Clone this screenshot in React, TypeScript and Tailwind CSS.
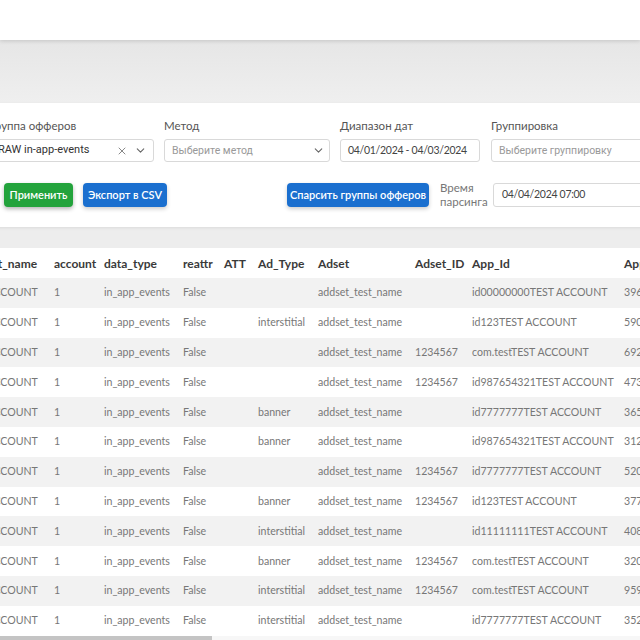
import { ChevronDown, X } from 'lucide-react'

type Row = {
  adType: string;
  adsetId: string;
  appId: string;
  app: string;
}

const rows: Row[] = [
  { adType: '', adsetId: '', appId: 'id00000000TEST ACCOUNT', app: '39612' },
  { adType: 'interstitial', adsetId: '', appId: 'id123TEST ACCOUNT', app: '59034' },
  { adType: '', adsetId: '1234567', appId: 'com.testTEST ACCOUNT', app: '69215' },
  { adType: '', adsetId: '1234567', appId: 'id987654321TEST ACCOUNT', app: '47381' },
  { adType: 'banner', adsetId: '', appId: 'id7777777TEST ACCOUNT', app: '36544' },
  { adType: 'banner', adsetId: '', appId: 'id987654321TEST ACCOUNT', app: '31209' },
  { adType: '', adsetId: '1234567', appId: 'id7777777TEST ACCOUNT', app: '52077' },
  { adType: 'banner', adsetId: '1234567', appId: 'id123TEST ACCOUNT', app: '37760' },
  { adType: 'interstitial', adsetId: '', appId: 'id11111111TEST ACCOUNT', app: '40818' },
  { adType: 'banner', adsetId: '1234567', appId: 'com.testTEST ACCOUNT', app: '32093' },
  { adType: 'interstitial', adsetId: '1234567', appId: 'com.testTEST ACCOUNT', app: '95946' },
  { adType: 'interstitial', adsetId: '', appId: 'id7777777TEST ACCOUNT', app: '35221' },
]

const headers = ['account_name', 'account', 'data_type', 'reattr', 'ATT', 'Ad_Type', 'Adset', 'Adset_ID', 'App_Id', 'App_Name']

const gridCols = 'grid grid-cols-[94px_50px_79px_41px_34px_60px_97px_57px_152px_80px]'

function Field({ label, width, children }: { label: string; width: string; children: React.ReactNode }) {
  return (
    <div className={width}>
      <div className="text-[11.5px] leading-[14px] text-[#555] mb-[6px] whitespace-nowrap">{label}</div>
      {children}
    </div>
  )
}

export default function App() {
  return (
    <div className="w-[640px] h-[640px] overflow-hidden bg-[#ededed] font-['Lato',sans-serif]">
      <div className="h-[40px] bg-white shadow-[0_1px_4px_rgba(0,0,0,0.15)] relative z-10" />
      <div className="h-[63px] bg-gradient-to-b from-[#e6e6e6] to-[#efefef]" />

      <div className="-ml-[26px] w-[720px] h-[124px] bg-white shadow-[0_1px_3px_rgba(0,0,0,0.08)] pt-[16px] pl-[16px]">
        <div className="flex gap-[10px]">
          <Field label="Группа офферов" width="w-[164px]">
            <div className="h-[23px] border border-[#d9d9d9] rounded-[3px] flex items-center pl-[7px] pr-[6px] font-['Roboto',sans-serif] text-[11px] text-[#333]">
              <span className="flex-1 whitespace-nowrap">RAW in-app-events</span>
              <X size={12} className="text-[#888] mr-[6px]" strokeWidth={2} />
              <ChevronDown size={13} className="text-[#666]" strokeWidth={2} />
            </div>
          </Field>
          <Field label="Метод" width="w-[166px]">
            <div className="h-[23px] border border-[#d9d9d9] rounded-[3px] flex items-center pl-[7px] pr-[4px] font-['Roboto',sans-serif] text-[10.5px] text-[#999]">
              <span className="flex-1">Выберите метод</span>
              <ChevronDown size={13} className="text-[#666]" strokeWidth={2} />
            </div>
          </Field>
          <Field label="Диапазон дат" width="w-[140px]">
            <div className="h-[23px] border border-[#d9d9d9] rounded-[3px] flex items-center pl-[7px] text-[10.5px] tracking-[-0.3px] text-[#444] whitespace-nowrap">
              04/01/2024 - 04/03/2024
            </div>
          </Field>
          <Field label="Группировка" width="w-[170px] ml-[1px]">
            <div className="h-[23px] border border-[#d9d9d9] rounded-[3px] flex items-center pl-[7px] font-['Roboto',sans-serif] text-[10.5px] text-[#999] whitespace-nowrap">
              Выберите группировку
            </div>
          </Field>
        </div>

        <div className="flex items-center mt-[21px] h-[24px]">
          <button className="ml-[14px] w-[69px] h-[24px] rounded-[4px] bg-[#23a33c] text-white text-[11px] font-semibold shadow-[0_2px_4px_rgba(0,0,0,0.3)]">
            Применить
          </button>
          <button className="ml-[10px] w-[84px] h-[24px] rounded-[4px] bg-[#1a6fcf] text-white text-[11px] font-semibold shadow-[0_2px_4px_rgba(0,0,0,0.2)]">
            Экспорт в CSV
          </button>
          <button className="ml-[120px] w-[142px] h-[24px] rounded-[4px] bg-[#1a6fcf] text-white text-[11px] font-semibold shadow-[0_2px_4px_rgba(0,0,0,0.2)] whitespace-nowrap">
            Спарсить группы офферов
          </button>
          <div className="ml-[11px] w-[44px] text-[11.5px] leading-[14px] text-[#777]">
            Время парсинга
          </div>
          <div className="ml-[9px] w-[170px] h-[24px] border border-[#d9d9d9] rounded-[3px] flex items-center pl-[8px] text-[10.5px] tracking-[-0.3px] text-[#444]">
            04/04/2024 07:00
          </div>
        </div>
      </div>

      <div className="h-[21px]" />

      <div className="bg-white w-[700px] -ml-[40px]">
        <div className={`${gridCols} h-[30px] pt-[2px] items-center text-[12px] font-bold text-[#3a3a3a]`}>
          {headers.map((h) => (
            <div key={h} className="whitespace-nowrap">{h}</div>
          ))}
        </div>
        {rows.map((r, i) => (
          <div
            key={i}
            className={`${gridCols} h-[29.8px] pt-[1px] items-center text-[10.6px] text-[#777] ${i % 2 === 0 ? 'bg-[#f2f2f2]' : 'bg-white'}`}
          >
            <div className="whitespace-nowrap">TEST ACCOUNT</div>
            <div>1</div>
            <div>in_app_events</div>
            <div>False</div>
            <div></div>
            <div>{r.adType}</div>
            <div className="whitespace-nowrap">addset_test_name</div>
            <div>{r.adsetId}</div>
            <div className="whitespace-nowrap">{r.appId}</div>
            <div>{r.app}</div>
          </div>
        ))}
        <div className="h-[8px] bg-[#f7f7f7] flex">
          <div className="ml-[40px] w-[212px] h-[7px] bg-[#c4c4c4]" />
        </div>
      </div>
    </div>
  )
}
